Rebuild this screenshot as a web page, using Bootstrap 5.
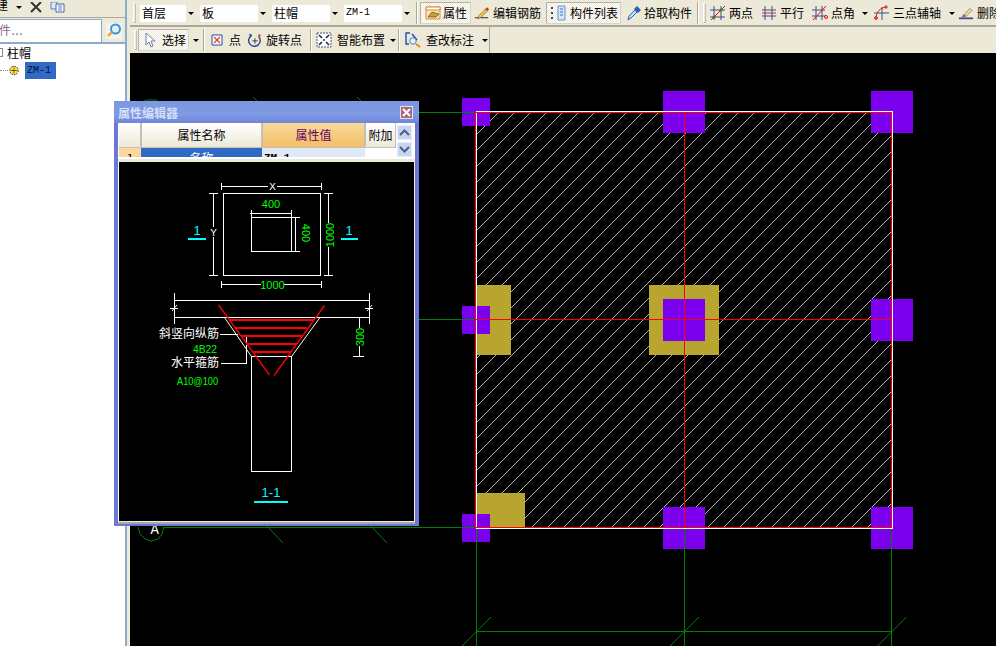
<!DOCTYPE html>
<html lang="zh-CN">

<head>
  <meta charset="UTF-8" />
  <meta name="viewport" content="width=device-width, initial-scale=1.0" />
  <title>属性编辑器</title>
  <link href="https://cdn.jsdelivr.net/npm/bootstrap@5.3.0/dist/css/bootstrap.min.css" rel="stylesheet" />
  <style>
    html, body {
      height: 646px;
      overflow: hidden;
    }

    body {
      font-family: "Noto Sans CJK SC", "Liberation Sans", sans-serif;
      font-size: 12px;
      line-height: 16px;
      color: #000;
      background: #ece9d8;
    }

    .app-shell {
      position: relative;
      width: 996px;
      height: 646px;
    }

    /* left panel */
    .side-pane {
      width: 130px;
      flex: 0 0 130px;
      border-right: 3px solid #ece9d8;
    }

    .side-inner {
      height: 100%;
      background: #fff;
      border-right: 2px solid #8eaacb;
    }

    .side-tools {
      height: 18px;
      background: #ece9d8;
      border-bottom: 1px solid #aca899;
      overflow: hidden;
      align-items: flex-end;
      padding-bottom: 4px;
    }

    .side-clipped {
      margin-left: -4px;
    }

    .side-search {
      height: 26px;
      background: #ece9d8;
      border-bottom: 2px solid #8eaacb;
      padding-top: 1px;
    }

    .search-box {
      width: 102px;
      height: 24px;
      background: #fff;
      border: 1px solid #8eaacb;
      border-left: 0;
      color: #8a6a8a;
      line-height: 20px;
      text-indent: -1px;
      letter-spacing: .5px;
      overflow: hidden;
      white-space: nowrap;
    }

    .tree-row {
      height: 17px;
      line-height: 17px;
      white-space: nowrap;
    }

    .tree-first {
      margin-bottom: 1px;
    }

    .tree-expand {
      width: 3px;
      height: 9px;
      margin-right: 4px;
      border: 1px solid #888;
      border-left: 0;
    }

    .tree-dots {
      width: 8px;
      border-top: 1px dotted #888;
      margin-right: 1px;
    }

    .tree-selected {
      background: #316ac5;
      padding: 0 2px;
      margin-left: 6px;
      width: 31px;
      font-family: "Liberation Mono", monospace;
      font-size: 10px;
      color: #041030;
    }

    /* toolbars */
    .tool-row {
      height: 27px;
      padding-top: 1px;
      border-bottom: 2px solid #aca899;
      overflow: hidden;
      white-space: nowrap;
      flex: 0 0 auto;
    }

    .tool-row2 {
      height: 26px;
      flex: 0 0 auto;
      overflow: hidden;
      white-space: nowrap;
    }

    .tool-grip {
      width: 3px;
      height: 20px;
      flex: 0 0 3px;
      border: 1px solid #c2bfb0;
      border-left-color: #fff;
      border-top-color: #fff;
    }

    .grip-first {
      margin-left: 3px;
      margin-right: 4px;
    }

    .tool-sep {
      width: 2px;
      height: 22px;
      flex: 0 0 2px;
      background: #aca899;
      border-right: 1px solid #fff;
    }

    .tool-combo {
      height: 17px;
      background: #fff;
      flex: 0 0 auto;
      justify-content: space-between;
      padding-left: 2px;
      margin-right: 4px;
    }

    .combo-first { width: 56px; }
    .combo-wide { width: 68px; }

    .combo-drop {
      width: 10px;
      height: 100%;
      background: #ece9d8;
    }

    .tool-arrow {
      width: 0;
      height: 0;
      border-left: 3px solid transparent;
      border-right: 3px solid transparent;
      border-top: 3px solid #000;
      flex: 0 0 auto;
    }

    .mono-text {
      font-family: "Liberation Mono", monospace;
      font-size: 10px;
    }

    .tool-btn {
      height: 22px;
      flex: 0 0 auto;
      gap: 3px;
      padding-left: 3px;
      overflow: hidden;
    }

    .tool-on {
      background: repeating-conic-gradient(#fff 0 25%, #ece9d8 0 50%) 0 0 / 2px 2px;
      border: 1px solid #d8d5c8;
      border-top-color: #b5b2a5;
      border-left-color: #b5b2a5;
      padding-left: 2px;
    }

    .tool-btn svg { flex: 0 0 16px; }

    .w-prop { width: 51px; margin-left: 2px; gap: 2px; padding-left: 4px; }
    .w-rebar { width: 70px; margin-left: 3px; padding-left: 0; }
    .w-list { width: 75px; margin-left: 2px; gap: 4px; padding-left: 3px; }
    .w-pick { width: 68px; margin-left: 4px; gap: 2px; padding-left: 1px; }
    .w-two { width: 48px; margin-left: 2px; gap: 3px; padding-left: 2px; }
    .w-para { width: 46px; margin-left: 4px; gap: 3px; padding-left: 1px; }
    .w-angle { width: 57px; margin-left: 5px; gap: 3px; padding-left: 1px; }
    .w-three { width: 82px; margin-left: 5px; gap: 4px; padding-left: 0; }
    .w-del { width: 40px; margin-left: 3px; padding-left: 0; }
    .w-sel { width: 51px; margin-left: 1px; gap: 4px; padding-left: 3px; }
    .w-dot { width: 33px; margin-left: 4px; gap: 4px; padding-left: 0; }
    .w-turn { width: 59px; margin-left: 5px; gap: 3px; padding-left: 0; }
    .w-smart { width: 82px; margin-left: 4px; gap: 5px; padding-left: 0; }
    .w-check { width: 86px; margin-left: 3px; gap: 5px; padding-left: 2px; }
    .w-check .tool-arrow { margin-left: 3px; }

    .tool-end {
      border-right: 1px solid #aca899;
      height: 26px;
    }

    /* drawing area */
    .plan-area {
      background: #000;
      overflow: hidden;
    }

    .plan-area svg, .win-drawing svg {
      display: block;
    }

    .crisp { shape-rendering: crispEdges; }

    /* floating property window */
    .prop-win {
      position: absolute;
      left: 114px;
      top: 101px;
      width: 305px;
      height: 425px;
      background: #6b78d6;
      padding: 0 4px 4px;
      box-shadow: inset 0 1px 0 #8fa4e6;
    }

    .win-title {
      height: 22px;
      color: #d3def7;
      font-weight: 700;
      background: linear-gradient(#7c98e2, #7f9ae4 60%, #7086d8);
      margin: 0 -4px;
      padding: 2px 6px 0 4px;
    }

    .win-close {
      width: 13px;
      height: 13px;
      background: #a8687e;
      border: 1px solid #e8e0ea;
      margin-top: -1px;
    }

    .win-grid {
      height: 35px;
      background: #fff;
      overflow: hidden;
      padding-left: 1px;
    }

    .grid-clip {
      height: 34px;
      flex: 0 0 277px;
      overflow: hidden;
    }

    .attr-grid {
      table-layout: fixed;
      width: 277px;
      border-collapse: collapse;
    }

    .attr-grid th, .attr-grid td {
      padding: 0;
      text-align: center;
      font-weight: 400;
      overflow: hidden;
      white-space: nowrap;
    }

    .attr-grid th {
      height: 24px;
      font-size: 12px;
      background: linear-gradient(#fff, #ece9d8);
      border-right: 2px solid #c4c1b4;
      border-bottom: 1px solid #c4c1b4;
    }

    .attr-grid th.attr-active {
      background: linear-gradient(#f8d9a0, #f2bf62);
      color: #660066;
    }

    .attr-grid td {
      line-height: 12px;
      font-size: 12px;
      vertical-align: top;
      padding-top: 4px;
    }

    .cell-index { background: #fbd79c; }
    .cell-name { background: #316ac5; color: #fff; }
    .attr-grid td.cell-value {
      background: #dfe8f6;
      text-align: left;
      font-family: "Liberation Mono", monospace;
      font-weight: 700;
      font-size: 11px;
      padding-left: 2px;
    }

    .grid-scroll {
      width: 18px;
      gap: 2px;
      padding: 2px 1px 0 1px;
    }

    .scroll-btn {
      width: 15px;
      height: 15px;
      flex: 0 0 15px;
      background: #c6d5f0;
      border: 1px solid #e8eefb;
    }

    .win-strip {
      height: 4px;
      background: #ece9d8;
      border-top: 1px solid #fff;
    }

    .win-drawing {
      border-left: 1px solid #fff;
      border-right: 1px solid #ece9d8;
      border-bottom: 1px solid #ece9d8;
      box-shadow: 0 2px 0 #a9a8b0;
      background: #000;
      height: 360px;
    }

    .cad-green { fill: #0f0; font-family: "Liberation Sans", sans-serif; font-size: 11px; }
    .cad-cyan { fill: #0ff; font-family: "Liberation Sans", sans-serif; font-size: 13px; }
    .cad-white { fill: #fff; font-family: "Noto Sans CJK SC", sans-serif; font-size: 12px; }
    .cad-tag { fill: #fff; font-family: "Liberation Mono", monospace; font-size: 11px; }
    .axis-tag { fill: #fff; font-family: "Liberation Mono", monospace; font-size: 14px; }
  </style>
</head>

<body>
  <div class="app-shell d-flex">

    <!-- 左侧构件列表 -->
    <div class="side-pane">
      <div class="side-inner d-flex flex-column">
        <div class="side-tools d-flex">
          <span class="side-clipped">建</span>
          <span class="tool-arrow ms-2 mb-1"></span>
          <svg class="ms-2" width="12" height="11" viewBox="0 0 12 11"><path d="M1 0l10 10M11 0L1 10" stroke="#333" stroke-width="2" fill="none"/></svg>
          <svg class="ms-2" width="16" height="11" viewBox="0 0 16 11"><path d="M1 0h6v7H1z" fill="#dfe9f7" stroke="#5a7fb8"/><path d="M6 2h8v8H6z" fill="#fff" stroke="#3c68a8"/><path d="M8 4h4M8 6h4M8 8h4" stroke="#5a7fb8"/></svg>
        </div>
        <div class="side-search d-flex">
          <div class="search-box">件...</div>
          <svg class="ms-1 mt-1" width="16" height="16" viewBox="0 0 16 16"><rect width="16" height="16" fill="#f6f4ea"/><circle cx="9.500" cy="6" r="4.500" fill="#dff2fb" stroke="#3d95d8" stroke-width="2"/><path d="M6 9l-4 4" stroke="#e8a03a" stroke-width="2.400"/></svg>
        </div>
        <div class="tree-row tree-first d-flex align-items-center">
          <span class="tree-expand"></span>
          <span>柱帽</span>
        </div>
        <div class="tree-row d-flex align-items-center">
          <span class="tree-dots"></span>
          <svg width="10" height="11" viewBox="0 0 10 11"><circle cx="5" cy="5.500" r="4.200" fill="#ffe63a" stroke="#222" stroke-dasharray="1.500 1"/><path d="M2 5.500h6M5 2.500v6" stroke="#222" stroke-width=".7"/></svg>
          <span class="tree-selected">ZM-1</span>
        </div>
      </div>
    </div>

    <!-- 工具栏和绘图区 -->
    <div class="flex-grow-1 d-flex flex-column overflow-hidden">
      <div class="tool-row d-flex align-items-center">
        <span class="tool-grip grip-first"></span>
        <div class="tool-combo combo-first d-flex align-items-center"><span>首层</span><span class="combo-drop d-flex align-items-center justify-content-center"><i class="tool-arrow"></i></span></div>
        <div class="tool-combo combo-wide d-flex align-items-center"><span>板</span><span class="combo-drop d-flex align-items-center justify-content-center"><i class="tool-arrow"></i></span></div>
        <div class="tool-combo combo-wide d-flex align-items-center"><span>柱帽</span><span class="combo-drop d-flex align-items-center justify-content-center"><i class="tool-arrow"></i></span></div>
        <div class="tool-combo combo-wide d-flex align-items-center"><span class="mono-text">ZM-1</span><span class="combo-drop d-flex align-items-center justify-content-center"><i class="tool-arrow"></i></span></div>
        <span class="tool-sep"></span>
        <div class="tool-btn tool-on w-prop d-flex align-items-center">
          <svg width="16" height="16" viewBox="0 0 16 16"><path d="M1 2h14v12H1z" fill="#fde3b0" stroke="#d88a3a"/><path d="M1 2h14v3H1z" fill="#fff" stroke="#d88a3a"/><path d="M3 12l4-5 3 1 4 1-3 3z" fill="#c8a040" stroke="#6b5520" stroke-width=".8"/></svg>
          <span>属性</span>
        </div>
        <div class="tool-btn w-rebar d-flex align-items-center">
          <svg width="17" height="16" viewBox="0 0 17 16"><path d="M1 13h14" stroke="#222"/><path d="M5 11l8-8 2 2-8 8-3 1z" fill="#f2c84c" stroke="#8a6a18" stroke-width=".8"/><path d="M12 4l2-2 2 2-2 2z" fill="#c0392b"/></svg>
          <span>编辑钢筋</span>
        </div>
        <div class="tool-btn tool-on w-list d-flex align-items-center">
          <svg width="16" height="16" viewBox="0 0 16 16"><path d="M1 3h3M1 8h3M1 13h3" stroke="#445" stroke-width="2" stroke-dasharray="2 1"/><path d="M8 1h7v14H8z" fill="#d6e6f8" stroke="#6a8fc0"/><path d="M10 4h3M10 7h3M10 10h3" stroke="#3572c0"/></svg>
          <span>构件列表</span>
        </div>
        <div class="tool-btn w-pick d-flex align-items-center">
          <svg width="16" height="16" viewBox="0 0 16 16"><path d="M2 15l1-4 6-6 2 2-6 6z" fill="#bfe0f7" stroke="#2a64b0"/><path d="M8 4l3-3 4 4-3 3z" fill="#2a64b0"/></svg>
          <span>拾取构件</span>
        </div>
        <span class="tool-sep ms-1"></span>
        <span class="tool-grip ms-1"></span>
        <div class="tool-btn w-two d-flex align-items-center">
          <svg width="16" height="16" viewBox="0 0 16 16"><path d="M4 1v14M11 1v14M0 5h15M0 12h15" stroke="#3c4f8f" fill="none"/><path d="M1 15L15 1" stroke="#e01010"/><circle cx="4" cy="12" r="1.600" fill="#3a7a20"/><circle cx="11" cy="5" r="1.600" fill="#3a7a20"/></svg>
          <span>两点</span>
        </div>
        <div class="tool-btn w-para d-flex align-items-center">
          <svg width="16" height="16" viewBox="0 0 16 16"><path d="M4 1v14M11 1v14" stroke="#3c4f8f"/><path d="M1 5h14M1 11h14" stroke="#3c4f8f"/><path d="M1 8h14" stroke="#c03030"/></svg>
          <span>平行</span>
        </div>
        <div class="tool-btn w-angle d-flex align-items-center">
          <svg width="16" height="16" viewBox="0 0 16 16"><path d="M4 1v14M10 1v14M0 5h13M0 11h13" stroke="#3c4f8f"/><path d="M1 15L14 1" stroke="#e01010"/><circle cx="14" cy="12" r="1.500" fill="none" stroke="#e01010"/></svg>
          <span>点角</span>
          <i class="tool-arrow ms-1"></i>
        </div>
        <div class="tool-btn w-three d-flex align-items-center">
          <svg width="16" height="16" viewBox="0 0 16 16"><path d="M9 2v13M1 8h15" stroke="#3c4f8f"/><path d="M3 14C3 7 7 3 13 2" stroke="#e01010" fill="none"/><circle cx="3" cy="13" r="1.400" fill="none" stroke="#e01010"/><circle cx="13" cy="2" r="1.200" fill="none" stroke="#e01010"/></svg>
          <span>三点辅轴</span>
          <i class="tool-arrow ms-1"></i>
        </div>
        <div class="tool-btn w-del d-flex align-items-center">
          <svg width="18" height="16" viewBox="0 0 18 16"><path d="M1 14h16" stroke="#3c4f8f" stroke-width="2"/><path d="M5 12l8-9 3 2-8 8z" fill="#e8d8a8" stroke="#8a7a50" stroke-width=".8"/><path d="M4 12l3-3 2 2-2 2z" fill="#c04a9a"/></svg>
          <span>删除</span>
        </div>
      </div>

      <div class="tool-row2 d-flex align-items-center">
        <div class="tool-end d-flex align-items-center">
          <span class="tool-grip ms-1"></span>
          <div class="tool-btn tool-on w-sel d-flex align-items-center">
            <svg width="16" height="16" viewBox="0 0 16 16"><path d="M4 1v12l3-3 2 5 2-1-2-5h4z" fill="#fff" stroke="#6a7fa8"/></svg>
            <span>选择</span>
          </div>
          <i class="tool-arrow ms-1"></i>
          <span class="tool-sep ms-1"></span>
          <div class="tool-btn w-dot d-flex align-items-center">
            <svg width="16" height="16" viewBox="0 0 16 16"><path d="M3 3h10v10H3z" fill="#fff" stroke="#2a4a9a"/><path d="M5 5l6 6M11 5l-6 6" stroke="#e04040" stroke-width="1.400"/></svg>
            <span>点</span>
          </div>
          <div class="tool-btn w-turn d-flex align-items-center">
            <svg width="18" height="16" viewBox="0 0 18 16"><path d="M5 3a6.500 6.500 0 1 0 8 1" stroke="#2a4a8a" stroke-width="1.600" fill="none"/><path d="M9 6v6M6 9h6" stroke="#333"/><path d="M2 1l4 1-2 3z" fill="#2a4a8a"/><circle cx="14" cy="3" r="1.400" fill="#d04040"/></svg>
            <span>旋转点</span>
          </div>
          <span class="tool-sep ms-1"></span>
          <div class="tool-btn w-smart d-flex align-items-center">
            <svg width="16" height="16" viewBox="0 0 16 16"><path d="M1 1h14v14H1z" fill="#fff" stroke="#556" stroke-dasharray="2 1"/><path d="M3 3l3 3M13 3l-3 3M3 13l3-3M13 13l-3-3" stroke="#1a2a5a" stroke-width="1.600"/><path d="M7 8h2M8 7v2" stroke="#1a2a5a"/></svg>
            <span>智能布置</span>
            <i class="tool-arrow"></i>
          </div>
          <span class="tool-sep"></span>
          <div class="tool-btn w-check d-flex align-items-center">
            <svg width="16" height="16" viewBox="0 0 16 16"><path d="M5 1H1v11h3M7 2l5 6" stroke="#1f4fb0" stroke-width="1.400" fill="none"/><circle cx="8" cy="9" r="3.200" fill="#e6f2fb" stroke="#5f7fa0"/><path d="M11 12l4 3" stroke="#e08a2a" stroke-width="2"/></svg>
            <span>查改标注</span>
            <i class="tool-arrow"></i>
          </div>
        </div>
      </div>

      <div class="plan-area flex-grow-1">
        <svg width="866" height="593" viewBox="130 53 866 593">
          <defs>
            <pattern id="slabHatch" patternUnits="userSpaceOnUse" width="16" height="16">
              <path d="M0 3L3 0M3 16L16 3" stroke="#b4b4b4" stroke-width="1" shape-rendering="crispEdges"/>
            </pattern>
          </defs>
          <rect x="476" y="112" width="416" height="416" fill="url(#slabHatch)"/>
          <g class="crisp" fill="#b8a52f">
            <rect x="649" y="285" width="70" height="70"/>
            <rect x="477" y="285" width="34" height="70"/>
            <rect x="477" y="493" width="48" height="34"/>
          </g>
          <g class="crisp" fill="#7a00ee">
            <rect x="462" y="98" width="28" height="28"/>
            <rect x="462" y="306" width="28" height="28"/>
            <rect x="462" y="514" width="28" height="28"/>
            <rect x="663" y="91" width="42" height="42"/>
            <rect x="663" y="299" width="42" height="42"/>
            <rect x="663" y="507" width="42" height="42"/>
            <rect x="871" y="91" width="42" height="42"/>
            <rect x="871" y="299" width="42" height="42"/>
            <rect x="871" y="507" width="42" height="42"/>
          </g>
          <g class="crisp" stroke="#008000" fill="none">
            <path d="M419 112.500H476M419 319.500H476M163 527.500H476"/>
            <path d="M476.500 528V646M684.500 528V646M891.500 528V646M476 631.500H892"/>
          </g>
          <g stroke="#008000" fill="none">
            <path d="M462 646L491 617M670 646L699 617M877.500 646L906.500 617"/>
            <path d="M253 97L258 102M357 97L362 102M267 526L283 543M371 526L387 543"/>
            <path d="M141 103L146 100H156L161 103M138 527L140 534L145 539L151 541L158 539L162 534L164 527"/>
          </g>
          <text class="axis-tag" x="150.500" y="534">A</text>
          <g class="crisp" fill="none">
            <rect x="476.500" y="111.500" width="415.500" height="416.500" stroke="#fff"/>
            <rect x="475.500" y="112.500" width="416" height="415" stroke="#f00"/>
            <path d="M684.500 112V528M476 319.500H892" stroke="#f00"/>
          </g>
        </svg>
      </div>
    </div>

    <!-- 属性编辑器浮动窗口 -->
    <div class="prop-win d-flex flex-column">
      <div class="win-title d-flex align-items-center justify-content-between">
        <span>属性编辑器</span>
        <span class="win-close d-flex align-items-center justify-content-center">
          <svg width="9" height="9" viewBox="0 0 9 9"><path d="M1 1l7 7M8 1L1 8" stroke="#fff" stroke-width="2"/></svg>
        </span>
      </div>
      <div class="win-grid d-flex">
        <div class="grid-clip">
          <table class="attr-grid">
            <colgroup>
              <col style="width:22px">
              <col style="width:121px">
              <col style="width:103px">
              <col style="width:31px">
            </colgroup>
            <thead>
              <tr><th></th><th>属性名称</th><th class="attr-active">属性值</th><th>附加</th></tr>
            </thead>
            <tbody>
              <tr>
                <td class="cell-index">1</td>
                <td class="cell-name">名称</td>
                <td class="cell-value">ZM-1</td>
                <td></td>
              </tr>
            </tbody>
          </table>
        </div>
        <div class="grid-scroll d-flex flex-column">
          <span class="scroll-btn d-flex align-items-center justify-content-center">
            <svg width="11" height="7" viewBox="0 0 11 7"><path d="M1 6l4.500-4.500L10 6" stroke="#4d6185" stroke-width="2" fill="none"/></svg>
          </span>
          <span class="scroll-btn d-flex align-items-center justify-content-center">
            <svg width="11" height="7" viewBox="0 0 11 7"><path d="M1 1l4.500 4.500L10 1" stroke="#4d6185" stroke-width="2" fill="none"/></svg>
          </span>
        </div>
      </div>
      <div class="win-strip"></div>
      <div class="win-drawing flex-grow-1">
        <svg width="295" height="359" viewBox="119 162 295 359">
          <g class="crisp" stroke="#fff" fill="none">
            <rect x="223.500" y="193.500" width="97" height="82"/>
            <rect x="251.500" y="217.500" width="40" height="34"/>
            <path d="M222 186.500H268M277 186.500H321M221.500 183V190M321.500 183V190"/>
            <path d="M250 213.500H292M251.500 210V217M291.500 210V217"/>
            <path d="M295.500 217V252M292 217.500H300M292 251.500H300"/>
            <path d="M328.500 193V223M328.500 247V276M324 193.500H333M324 275.500H333"/>
            <path d="M213.500 193V227M213.500 237V276M209 193.500H218M209 275.500H218"/>
            <path d="M222 284.500H261M284 284.500H321M221.500 281V288M321.500 281V288"/>
            <path d="M174.500 293V324M369.500 293V324M174 300.500H370M174 317.500H370"/>
            <path d="M170 308.500H178M365 308.500H373"/>
            <path d="M251.500 356.500V471.500H291.500V356.500M251 356.500H292"/>
            <path d="M359.500 317V328M359.500 346V357M353 356.500H364"/>
            <path d="M220 334.500H238M221 363.500H246.500V337"/>
          </g>
          <g stroke="#fff" fill="none">
            <path d="M224.500 317.500L251.500 356.500M320 317.500L291.500 356.500"/>
            <path d="M172 311L177 305M367 311L372 305"/>
          </g>
          <g stroke="#f00" stroke-width="1.300" fill="none">
            <path d="M218.500 305L269.500 375M324.500 305.500L274 375.500"/>
          </g>
          <g class="crisp" stroke="#f00" stroke-width="2" fill="none">
            <path d="M229 319.500H314M235 327.500H307M241 335.500H303M246 343.500H297M253 352H290"/>
          </g>
          <g class="crisp" fill="#0ff">
            <rect x="188" y="238" width="18" height="2"/>
            <rect x="341" y="238" width="17" height="2"/>
            <rect x="254" y="501" width="34" height="2"/>
          </g>
          <text class="cad-tag" x="272.500" y="190" text-anchor="middle">X</text>
          <text class="cad-tag" x="213.500" y="236" text-anchor="middle">Y</text>
          <text class="cad-green" x="271" y="208" text-anchor="middle">400</text>
          <text class="cad-green" x="272.500" y="289" text-anchor="middle">1000</text>
          <text class="cad-green" transform="translate(301.500 233) rotate(90)" text-anchor="middle">400</text>
          <text class="cad-green" transform="translate(334 235) rotate(-90)" text-anchor="middle">1000</text>
          <text class="cad-green" transform="translate(364 337) rotate(-90)" text-anchor="middle">300</text>
          <text class="cad-cyan" x="197" y="235" text-anchor="middle">1</text>
          <text class="cad-cyan" x="349" y="235" text-anchor="middle">1</text>
          <text class="cad-cyan" x="271" y="497" text-anchor="middle">1-1</text>
          <text class="cad-white" x="219" y="338" text-anchor="end">斜竖向纵筋</text>
          <text class="cad-white" x="219" y="367" text-anchor="end">水平箍筋</text>
          <text class="cad-green" x="193" y="353" textLength="24" lengthAdjust="spacingAndGlyphs">4B22</text>
          <text class="cad-green" x="177" y="385" textLength="41" lengthAdjust="spacingAndGlyphs">A10@100</text>
        </svg>
      </div>
    </div>
  </div>

  <script src="https://cdn.jsdelivr.net/npm/bootstrap@5.3.0/dist/js/bootstrap.bundle.min.js"></script>
</body>

</html>
